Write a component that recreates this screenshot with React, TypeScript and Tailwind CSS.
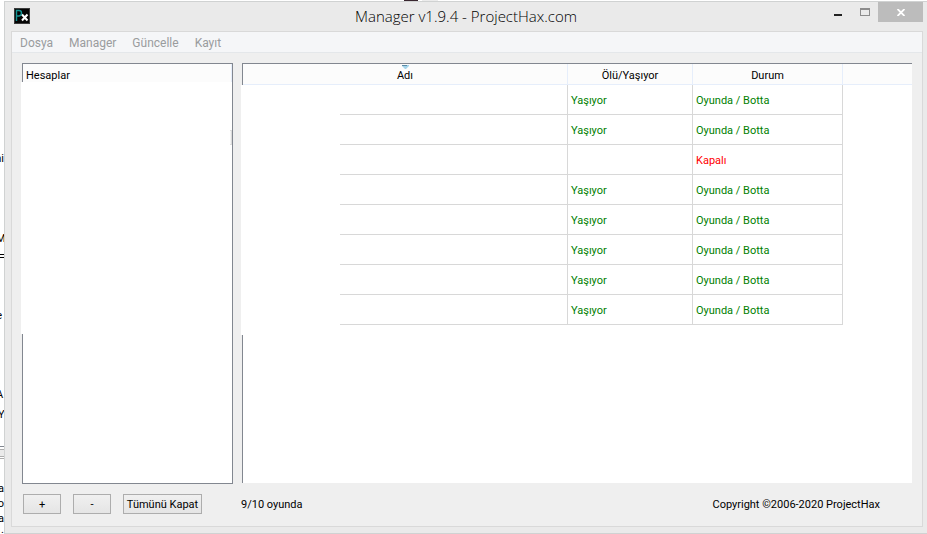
import clsx from "clsx";

type Account = {
  id: number;
  alive: string;
  status: string;
  online: boolean;
};

const menu = ["Dosya", "Manager", "Güncelle", "Kayıt"];

const accounts: Account[] = [
  { id: 1, alive: "Yaşıyor", status: "Oyunda / Botta", online: true },
  { id: 2, alive: "Yaşıyor", status: "Oyunda / Botta", online: true },
  { id: 3, alive: "", status: "Kapalı", online: false },
  { id: 4, alive: "Yaşıyor", status: "Oyunda / Botta", online: true },
  { id: 5, alive: "Yaşıyor", status: "Oyunda / Botta", online: true },
  { id: 6, alive: "Yaşıyor", status: "Oyunda / Botta", online: true },
  { id: 7, alive: "Yaşıyor", status: "Oyunda / Botta", online: true },
  { id: 8, alive: "Yaşıyor", status: "Oyunda / Botta", online: true },
];

const Logo = () => (
  <svg width="16" height="16" viewBox="0 0 16 16" className="shrink-0">
    <rect x=".5" y=".5" width="15" height="15" fill="#050505" stroke="#3c3c3c" />
    <path
      d="M2.5 13V2.5H5Q7.5 2.5 7.5 5T5 8H2.5"
      fill="none"
      stroke="#159494"
      strokeWidth="1.4"
    />
    <path d="M8 6.5L13.5 12.5M13.5 6.5L8 12.5" stroke="#fff" strokeWidth="2" />
  </svg>
);

// The strip of the window behind that stays visible on the left
const Behind = () => (
  <div className="relative w-1 shrink-0 overflow-hidden bg-white text-[11px] leading-4 text-black">
    <span className="absolute right-0 top-[151px]">ni</span>
    <span className="absolute -left-1 top-[231px]">M</span>
    <div className="absolute top-[254px] h-1 w-1 border-y border-black" />
    <span className="absolute right-0.5 top-[308px]">e</span>
    <span className="absolute -left-1 top-[387px]">A</span>
    <span className="absolute -left-0.5 top-[407px]">Y</span>
    <div className="absolute top-[446px] h-3 w-1 border-t border-[#828790]">
      <div className="mt-0.5 h-2 border-y border-[#adadad] bg-[#eaeaea]" />
    </div>
    <div className="absolute top-[458px] h-px w-1 bg-[#adadad]" />
    <div className="absolute right-0 top-[481px] flex flex-col items-end leading-[15px]">
      <span>a</span>
      <span>o</span>
      <span>a</span>
      <span className="leading-2">.</span>
    </div>
  </div>
);

const TitleBar = () => (
  <header className="relative flex h-[29px] shrink-0 items-start pl-[9px]">
    <div className="pt-1.5">
      <Logo />
    </div>
    <h1 className="absolute inset-x-0 top-1 text-center font-['Open_Sans',sans-serif] text-[15px] font-light leading-5 text-black">
      Manager v1.9.4 - ProjectHax.com
    </h1>
    <div className="relative ml-auto flex h-5 pr-1">
      <button aria-label="Küçült" className="flex w-[27px] items-center justify-center">
        <svg width="8" height="8">
          <rect y="6" width="8" height="2" fill="#222" />
        </svg>
      </button>
      <button aria-label="Ekranı kapla" className="flex w-[27px] items-center justify-center">
        <svg width="10" height="8">
          <path d="M.5 0V8M9.5 0V8M0 7.5H10" stroke="#8c8c8c" />
          <path d="M0 1H10" stroke="#8c8c8c" strokeWidth="2" />
        </svg>
      </button>
      <button aria-label="Kapat" className="flex w-[45px] items-center justify-center bg-[#bcbcbc]">
        <svg width="8" height="7" viewBox="0 0 8 7">
          <path d="M.5 0L7.5 7M7.5 0L.5 7" stroke="#fff" strokeWidth="1.8" />
        </svg>
      </button>
    </div>
  </header>
);

const Sidebar = () => (
  <aside className="relative w-[211px] shrink-0 border border-[#828790] bg-white">
    <h2 className="h-5 border-r border-[#e6eefb] bg-[#fcfcfc] pl-[3px] leading-6">
      Hesaplar
    </h2>
    <div className="absolute -left-0.5 right-0 top-[18px] h-[252px] bg-white" />
    <div className="absolute right-0 top-[66px] h-[15px] w-0.5 border-y border-r border-[#dcdcdc] bg-[#f4f4f4]" />
  </aside>
);

const head = "border-b border-[#e6eefb] bg-[#fcfcfc] p-0 pt-[3px] font-normal";
const cell = "border-b border-r border-[#d8d8d8] p-0 pl-[3px] pt-[3px]";

const AccountTable = () => (
  <section className="relative mb-px min-w-0 flex-1 border-l border-t border-[#828790] bg-white">
    <table className="w-full table-fixed border-separate border-spacing-0">
      <colgroup>
        <col className="w-[325px]" />
        <col className="w-[125px]" />
        <col className="w-[150px]" />
        <col />
      </colgroup>
      <thead>
        <tr className="h-[21px] leading-4">
          <th className={clsx(head, "relative border-r")}>
            <svg width="7" height="4" className="absolute left-[159px] top-px">
              <path d="M0 0H7V1L4 4H3L0 1Z" fill="#a3d3ea" />
              <path d="M0 .5H5" stroke="#5c8ba5" />
            </svg>
            Adı
          </th>
          <th className={clsx(head, "border-r")}>Ölü/Yaşıyor</th>
          <th className={clsx(head, "border-r")}>Durum</th>
          <td className={head} />
        </tr>
      </thead>
      <tbody>
        {accounts.map((account) => (
          <tr
            key={account.id}
            className={clsx("h-[30px]", account.online ? "text-[#008000]" : "text-[#ff0000]")}
          >
            <td className={cell} />
            <td className={cell}>{account.alive}</td>
            <td className={cell}>{account.status}</td>
            <td className="p-0" />
          </tr>
        ))}
      </tbody>
    </table>
    {/* account names are blanked out */}
    <div className="absolute -left-0.5 top-[21px] h-[250px] w-[99px] bg-white" />
  </section>
);

const button =
  "h-5 border border-[#adadad] bg-linear-to-b from-[#f0f0f0] to-[#e5e5e5] leading-[20px] text-black";

const Footer = () => (
  <footer className="flex h-[42px] shrink-0 items-start pl-[11px] pr-[42px] pt-2.5">
    <div className="flex w-[218px] gap-3">
      <button className={clsx(button, "w-[38px]")}>+</button>
      <button className={clsx(button, "w-[38px]")}>-</button>
      <button className={clsx(button, "w-[79px] whitespace-nowrap")}>Tümünü Kapat</button>
    </div>
    <p className="leading-[22px]">9/10 oyunda</p>
    <p className="ml-auto leading-[22px]">Copyright ©2006-2020 ProjectHax</p>
  </footer>
);

const App = () => {
  return (
    <div className="flex h-screen min-h-[460px] bg-white font-[Roboto,'Noto_Sans',sans-serif] text-[11px] text-black">
      <Behind />
      <div className="flex min-w-0 flex-1 flex-col">
        <div className="flex h-px shrink-0 pl-[400px]">
          <div className="w-3.5 bg-[#3a2730]" />
          <div className="ml-1 w-4 bg-[#ececec]" />
        </div>
        <div className="flex min-h-0 flex-1 flex-col border-y border-l border-[#d0d2d2] bg-[#eaeaea]">
          <TitleBar />
          <main className="mb-1.5 ml-1.5 mr-1 flex min-h-0 flex-1 flex-col border border-[#d9d9d9] bg-[#efefef]">
            <nav className="flex h-[21px] shrink-0 gap-4 border-b border-[#e4e7ea] bg-[#f5f6f8] pl-2 text-[12px] leading-[22px] text-[#9a9c9e]">
              {menu.map((item) => (
                <button key={item}>{item}</button>
              ))}
            </nav>
            <div className="flex min-h-0 flex-1 gap-[9px] px-2.5 pt-2.5">
              <Sidebar />
              <AccountTable />
            </div>
            <Footer />
          </main>
        </div>
      </div>
    </div>
  );
};

export default App;
